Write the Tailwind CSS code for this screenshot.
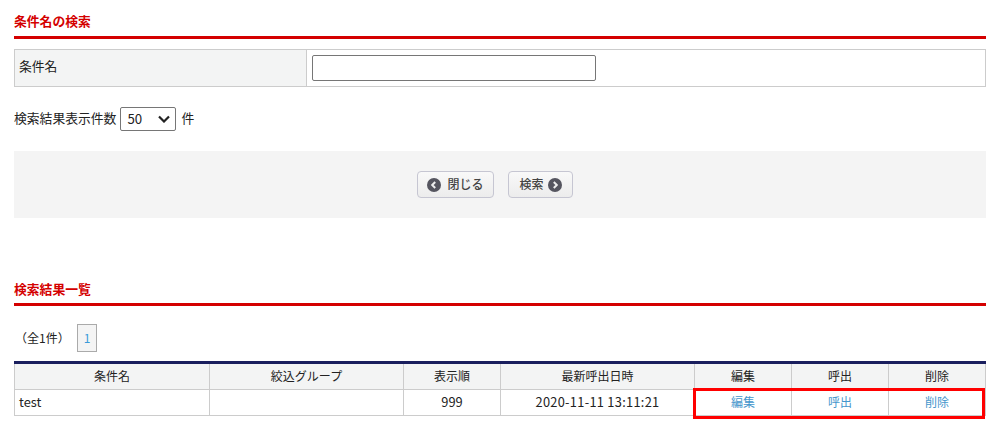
<!DOCTYPE html><html lang="ja">
<head>
  <meta charset="UTF-8" />
  <meta name="viewport" content="width=device-width, initial-scale=1.0" />
  <title>条件名の検索</title>
  <script src="https://cdn.jsdelivr.net/npm/@tailwindcss/browser@4"></script>
</head>
<body class="bg-white text-[12.8px] leading-[18px] text-[#222] font-['Noto_Sans_CJK_JP','Noto_Sans',sans-serif]">
  <div class="w-[999px] h-[435px] overflow-hidden pl-[14px] pr-[13px] pt-[13px]">

    <h2 class="h-[26px] border-b-[3px] border-[#d40000] text-[12.8px] leading-[16px] font-bold text-[#d40000]">条件名の検索</h2>

    <div class="mt-[10px] h-[38px] flex border border-[#ccc]">
      <div class="w-[292px] border-r border-[#ccc] bg-[#f3f4f4] pl-[4px] pt-[7px]">条件名</div>
      <div class="flex-1 pl-[5px] pt-[5px]">
        <input type="text" class="block w-[284px] h-[26px] bg-white border border-[#767676] rounded-[2px]" />
      </div>
    </div>

    <div class="mt-[20px] h-[24px] flex items-center">
      <span class="pb-[2px]">検索結果表示件数</span>
      <div class="ml-[4px] w-[56px] h-[24px] border border-[#767676] rounded-[2px] flex items-center justify-between pl-[6px] pr-[5px] text-[13.3px]">
        <span class="pb-[1px]">50</span>
        <svg width="12" height="8" viewBox="0 0 12 8" fill="none" stroke="#222" stroke-width="2.2"><path d="M1 1.5l5 5 5-5" /></svg>
      </div>
      <span class="ml-[5px] pb-[2px]">件</span>
    </div>

    <div class="mt-[20px] h-[67px] bg-[#f4f4f4] flex items-center justify-center gap-[14px] pr-[10px]">
      <button class="w-[77px] h-[27px] flex items-center justify-center gap-[6px] border border-[#c6c6d2] rounded-[4px] bg-gradient-to-b from-[#f9f9f9] to-[#ececec] text-[12px] font-medium text-[#444]">
        <svg width="14" height="14" viewBox="0 0 14 14"><circle cx="7" cy="7" r="7" fill="#55555f" /><path d="M8.2 4L5.2 7l3 3" fill="none" stroke="#eee" stroke-width="2" /></svg>
        <span class="pb-[2px]">閉じる</span>
      </button>
      <button class="w-[65px] h-[27px] flex items-center justify-center gap-[4px] border border-[#c6c6d2] rounded-[4px] bg-gradient-to-b from-[#f9f9f9] to-[#ececec] text-[12px] font-medium text-[#444]">
        <span class="pb-[2px]">検索</span>
        <svg width="14" height="14" viewBox="0 0 14 14"><circle cx="7" cy="7" r="7" fill="#55555f" /><path d="M5.8 4l3 3-3 3" fill="none" stroke="#eee" stroke-width="2" /></svg>
      </button>
    </div>

    <h2 class="mt-[61px] h-[27px] border-b-[3px] border-[#d40000] text-[12.8px] leading-[16px] font-bold text-[#d40000] pt-[2px]">検索結果一覧</h2>

    <div class="mt-[18px] h-[28px] flex items-center text-[12px]">
      <span class="ml-[1px] w-[62px]">（全1件）</span>
      <a class="w-[20px] h-[28px] flex items-center justify-center border border-[#aaa] bg-[#f4f4f4] text-[#3a9ad9]">1</a>
    </div>

    <div class="relative mt-[9px] text-[12px]">
      <table class="w-[972px] table-fixed border-collapse border-t-[3px] border-t-[#1a1f5e]">
        <colgroup>
          <col class="w-[195px]" /><col class="w-[194px]" /><col class="w-[97px]" /><col class="w-[194px]" /><col class="w-[97px]" /><col class="w-[97px]" /><col class="w-[97px]" />
        </colgroup>
        <thead>
          <tr class="h-[27px] bg-[#f3f4f4]">
            <th class="border border-[#ccc] font-normal pb-[2px]">条件名</th>
            <th class="border border-[#ccc] font-normal pb-[2px]">絞込グループ</th>
            <th class="border border-[#ccc] font-normal pb-[2px]">表示順</th>
            <th class="border border-[#ccc] font-normal pb-[2px]">最新呼出日時</th>
            <th class="border border-[#ccc] font-normal pb-[2px]">編集</th>
            <th class="border border-[#ccc] font-normal pb-[2px]">呼出</th>
            <th class="border border-[#ccc] font-normal pb-[2px]">削除</th>
          </tr>
        </thead>
        <tbody>
          <tr class="h-[26px]">
            <td class="border border-[#ccc] pl-[4px] pb-[2px] text-[12.8px]">test</td>
            <td class="border border-[#ccc]"></td>
            <td class="border border-[#ccc] pb-[2px] text-center text-[12.8px]">999</td>
            <td class="border border-[#ccc] pb-[2px] text-center text-[12.8px] tracking-[0.3px]">2020-11-11 13:11:21</td>
            <td class="border border-[#ccc] pb-[2px] text-center text-[#4596cc]">編集</td>
            <td class="border border-[#ccc] pb-[2px] text-center text-[#4596cc]">呼出</td>
            <td class="border border-[#ccc] pb-[2px] text-center text-[#4596cc]">削除</td>
          </tr>
        </tbody>
      </table>
      <div class="absolute left-[679px] top-[27px] w-[292px] h-[31px] border-[3px] border-[#ff0000]"></div>
    </div>
  </div>
</body>
</html>
